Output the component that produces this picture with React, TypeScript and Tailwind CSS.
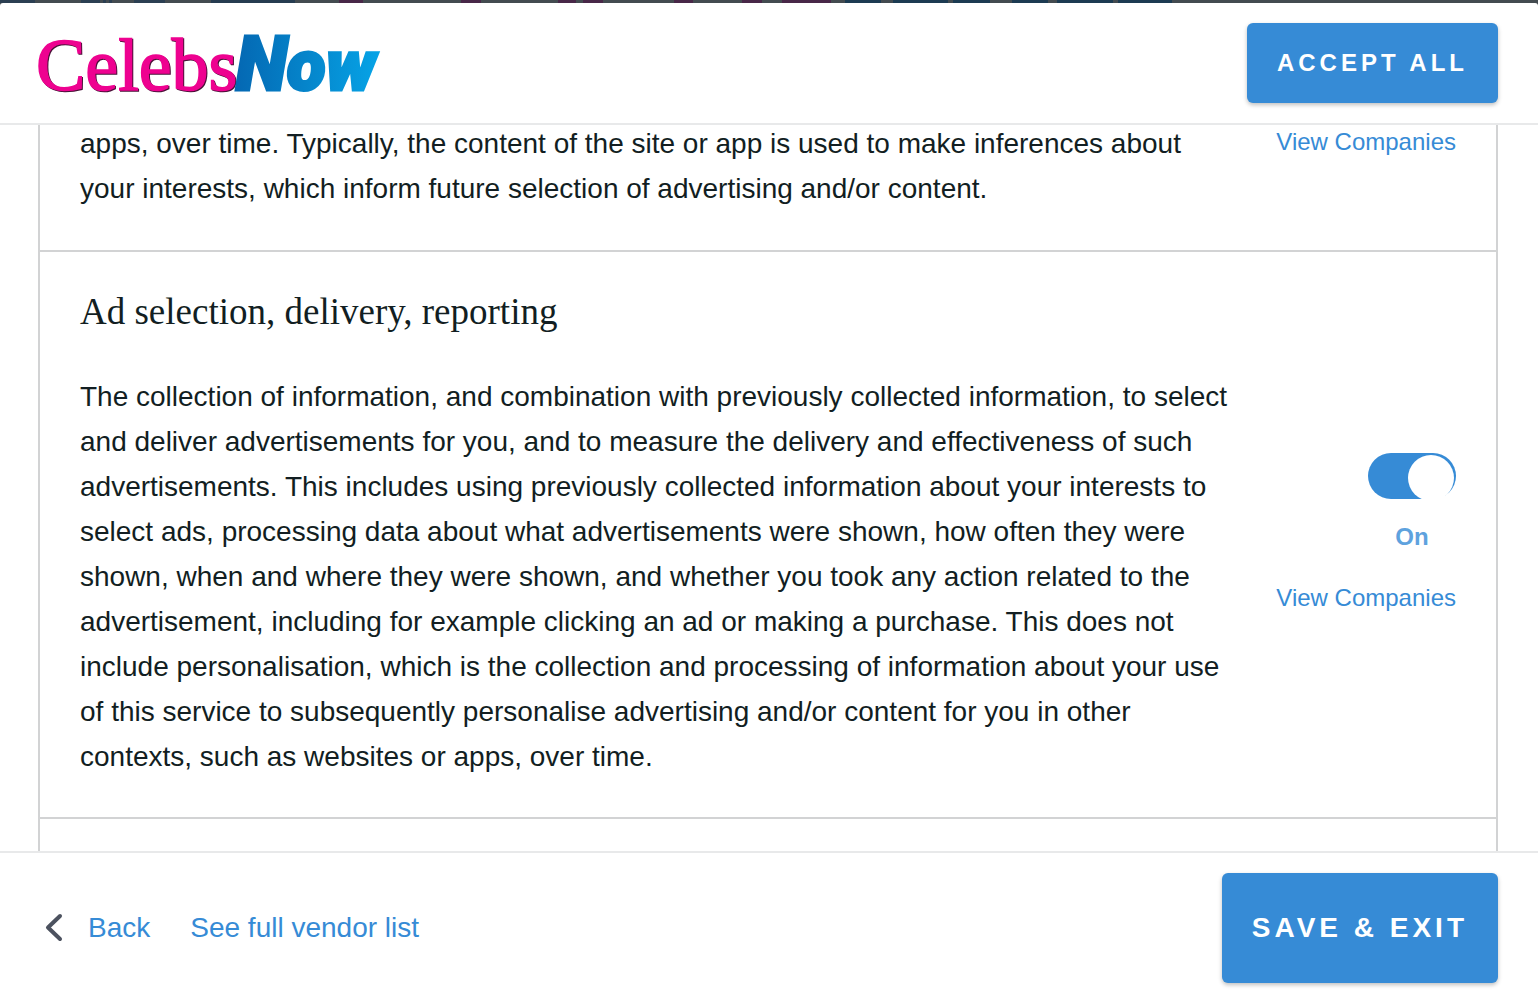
import React, { useState } from "react";

const STRIP_BASE = "#434b50";

const stripBlocks: { x: number; w: number; fill: string }[] = [
  { x: 0, w: 35, fill: "#2b3f52" },
  { x: 81, w: 19, fill: "#2b3f52" },
  { x: 103, w: 3, fill: "#2b3f52" },
  { x: 109, w: 3, fill: "#2b3f52" },
  { x: 134, w: 31, fill: "#2b3f52" },
  { x: 211, w: 84, fill: "#263c50" },
  { x: 339, w: 24, fill: "#482748" },
  { x: 461, w: 20, fill: "#482748" },
  { x: 558, w: 18, fill: "#482748" },
  { x: 583, w: 20, fill: "#482748" },
  { x: 674, w: 19, fill: "#482748" },
  { x: 742, w: 20, fill: "#482748" },
  { x: 782, w: 49, fill: "#482748" },
  { x: 845, w: 36, fill: "#1c3b52" },
  { x: 893, w: 55, fill: "#1c3b52" },
  { x: 953, w: 37, fill: "#1c3b52" },
  { x: 1012, w: 36, fill: "#1c3b52" },
  { x: 1057, w: 56, fill: "#1c3b52" },
  { x: 1118, w: 54, fill: "#1c3b52" },
];

function Backdrop() {
  return (
    <svg className="block h-[3px] w-full shrink-0" viewBox="0 0 1538 3" preserveAspectRatio="none" aria-hidden="true">
      <rect width="1538" height="3" fill={STRIP_BASE} />
      {stripBlocks.map((b) => (
        <rect key={b.x} x={b.x} width={b.w} height="3" fill={b.fill} />
      ))}
    </svg>
  );
}

function Logo() {
  return (
    <svg width="350" height="80" viewBox="0 0 350 80" role="img" aria-label="CelebsNow" className="shrink-0 overflow-visible">
      <defs>
        <linearGradient id="nowFill" gradientUnits="userSpaceOnUse" x1="198" y1="0" x2="340" y2="0">
          <stop offset="0" stopColor="#0468b3" />
          <stop offset="0.5" stopColor="#0585cb" />
          <stop offset="1" stopColor="#06a3e6" />
        </linearGradient>
      </defs>
      <text
        x="-2"
        y="67"
        fill="#ee0290"
        stroke="#ee0290"
        strokeWidth="1.5"
        fontSize="74"
        fontFamily="'Liberation Serif', serif"
        className="drop-shadow-[1px_1px_0_#4a1238]"
      >
        Celebs
      </text>
      <text
        x="198"
        y="67"
        fill="url(#nowFill)"
        stroke="url(#nowFill)"
        strokeWidth="3"
        fontFamily="Roboto, sans-serif"
        fontWeight="900"
        fontStyle="italic"
      >
        <tspan fontSize="75">N</tspan>
        <tspan fontSize="71">ow</tspan>
      </text>
    </svg>
  );
}

function CompaniesLink() {
  return (
    <a href="#companies" className="text-2xl leading-[41px] whitespace-nowrap text-[#368bd6]">
      View Companies
    </a>
  );
}

function ConsentSwitch() {
  const [on, setOn] = useState(true);
  return (
    <label className="flex w-[88px] cursor-pointer flex-col items-center gap-5">
      <span className={on ? "flex h-[46px] w-full justify-end rounded-full bg-[#368bd6] px-0.5 pt-0.5" : "flex h-[46px] w-full justify-start rounded-full bg-gray-300 px-0.5 pt-0.5"}>
        <input
          type="checkbox"
          role="switch"
          checked={on}
          onChange={(e) => setOn(e.target.checked)}
          className="size-[46px] shrink-0 cursor-pointer appearance-none rounded-full bg-white"
        />
      </span>
      <span className="text-2xl leading-[36px] font-bold text-[#5ea2de]">{on ? "On" : "Off"}</span>
    </label>
  );
}

export default function App() {
  return (
    <div className="flex h-screen flex-col overflow-hidden bg-[#434b50] font-['Liberation_Sans',Arial,sans-serif] text-[#121e22]">
      <Backdrop />
      <div className="flex min-h-0 flex-1 flex-col rounded-t-[3px] bg-white">
        <header className="flex shrink-0 items-center justify-between border-b-2 border-[#e8e9ea] py-5 pr-10 pl-[38px]">
          <Logo />
          <button type="button" className="h-20 rounded-md bg-[#368bd6] px-[30px] text-2xl font-bold tracking-[4px] text-white shadow-[0_2px_4px_rgba(0,0,0,0.25)]">
            ACCEPT ALL
          </button>
        </header>

        <main className="min-h-0 flex-1 overflow-hidden pr-10 pl-[38px]">
          <div className="-mt-1 border-x-2 border-[#d2d3d4]">
            <section className="flex items-start justify-between gap-10 border-b-2 border-[#d2d3d4] px-10 pb-[39px]">
              <p className="text-[28px] leading-[45px]">
                apps, over time. Typically, the content of the site or app is used to make inferences about your
                interests, which inform future selection of advertising and/or content.
              </p>
              <CompaniesLink />
            </section>

            <section className="flex items-center justify-between gap-10 border-b-2 border-[#d2d3d4] px-10 pt-10 pb-[38px]">
              <div className="flex flex-col gap-[42px]">
                <h2 className="font-['Liberation_Serif',serif] text-[37px] leading-[40px]">
                  Ad selection, delivery, reporting
                </h2>
                <p className="text-[28px] leading-[45px]">
                  The collection of information, and combination with previously collected information, to select and
                  deliver advertisements for you, and to measure the delivery and effectiveness of such advertisements.
                  This includes using previously collected information about your interests to select ads, processing
                  data about what advertisements were shown, how often they were shown, when and where they were shown,
                  and whether you took any action related to the advertisement, including for example clicking an ad or
                  making a purchase. This does not include personalisation, which is the collection and processing of
                  information about your use of this service to subsequently personalise advertising and/or content for
                  you in other contexts, such as websites or apps, over time.
                </p>
              </div>
              <div className="flex flex-col items-end gap-[22px]">
                <ConsentSwitch />
                <CompaniesLink />
              </div>
            </section>

            <section className="h-40" aria-hidden="true" />
          </div>
        </main>

        <footer className="flex shrink-0 items-center justify-between border-t-2 border-[#e8e9ea] px-10 pt-5 pb-[19px] text-[28px]">
          <nav className="flex items-center gap-10 text-[#368bd6]">
            <a href="#back" className="flex items-center gap-5">
              <svg width="28" height="32" viewBox="0 0 28 32" fill="none" stroke="#4c525f" strokeWidth="4" strokeLinecap="round" strokeLinejoin="round" aria-hidden="true">
                <path d="M20 4 8 15.500 20 27" />
              </svg>
              Back
            </a>
            <a href="#vendors">See full vendor list</a>
          </nav>
          <button type="button" className="h-[110px] rounded-md bg-[#368bd6] px-[30px] font-bold tracking-[4px] text-white shadow-[0_2px_4px_rgba(0,0,0,0.25)]">
            SAVE &amp; EXIT
          </button>
        </footer>
      </div>
    </div>
  );
}
